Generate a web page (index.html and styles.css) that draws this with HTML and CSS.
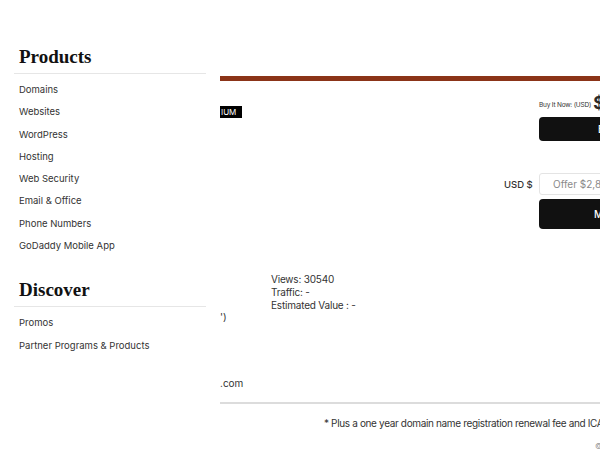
FILE: index.html
```html
<!DOCTYPE html>
<html lang="en">

<head>
    <meta charset="UTF-8">
    <meta name="viewport" content="width=device-width, initial-scale=1.0">
    <title>Domain for sale</title>
    <link rel="stylesheet" href="styles.css">
</head>

<body>
    <div class="layout">
        <!-- side menu -->
        <nav class="menu">
            <h2 class="menu-title">Products</h2>
            <ul class="menu-list">
                <li><a href="javascript:;">Domains</a></li>
                <li><a href="javascript:;">Websites</a></li>
                <li><a href="javascript:;">WordPress</a></li>
                <li><a href="javascript:;">Hosting</a></li>
                <li><a href="javascript:;">Web Security</a></li>
                <li><a href="javascript:;">Email &amp; Office</a></li>
                <li><a href="javascript:;">Phone Numbers</a></li>
                <li><a href="javascript:;">GoDaddy Mobile App</a></li>
            </ul>
            <h2 class="menu-title discover">Discover</h2>
            <ul class="menu-list">
                <li><a href="javascript:;">Promos</a></li>
                <li><a href="javascript:;">Partner Programs &amp; Products</a></li>
            </ul>
        </nav>

        <!-- page behind the menu -->
        <main class="page">
            <div class="bar"></div>
            <div class="top">
                <div class="left">
                    <span class="badge">IUM</span>
                </div>
                <div class="buy">
                    <div></div>
                    <div class="buy-now"><span class="small">Buy It Now: (USD)</span><b>$</b></div>
                    <div></div>
                    <button class="btn btn-buy">Buy Now</button>
                    <span class="cur">USD $</span>
                    <input type="text" placeholder="Offer $2,895">
                    <div></div>
                    <button class="btn btn-offer">Make Offer</button>
                </div>
            </div>
            <div class="stats">
                <p>Views: 30540</p>
                <p>Traffic: -</p>
                <p>Estimated Value : -</p>
            </div>
            <p class="tz">')</p>
            <p class="tld">.com</p>
            <hr class="rule">
            <p class="note">* Plus a one year domain name registration renewal fee and ICANN fee</p>
            <p class="copy">©</p>
        </main>
    </div>
</body>

</html>
```

FILE: styles.css
```css
html,
body,
ul,
p,
h2 {
    margin: 0;
    padding: 0;
}

body {
    width: 600px;
    height: 450px;
    overflow: hidden;
    background: #fff;
    font-family: Inter, "Liberation Sans", sans-serif;
    color: #2b2b2b;
}

.layout {
    display: flex;
    height: 450px;
}

/* 左边菜单 */
.menu {
    width: 192px;
    padding: 46px 0 0 14px;
    margin-right: 14px;
    flex-shrink: 0;
}

.menu-title {
    font-family: "Liberation Serif", serif;
    font-size: 19px;
    font-weight: bold;
    color: #111;
    padding: 0 0 5px 5px;
    border-bottom: 1px solid #e6e6e6;
    line-height: 22px;
}

.discover {
    margin-top: 22px;
}

.menu-list {
    list-style: none;
    padding: 5px 0 0 5px;
}

.menu-list li {
    height: 22.3px;
    line-height: 22px;
    font-size: 9.5px;
}

.menu-list a {
    color: #333;
    text-decoration: none;
}

/* 右边内容 */
.page {
    flex: 1;
    min-width: 0;
    overflow: hidden;
    padding-top: 76px;
    font-size: 10px;
}

.bar {
    height: 5px;
    background: #8b3418;
}

.top {
    display: grid;
    grid-template-columns: 280px 200px;
    height: 155px;
}

.badge {
    display: inline-block;
    margin-top: 25px;
    background: #000;
    color: #fff;
    font-size: 8px;
    line-height: 12px;
    padding: 0 6px 0 1px;
}

/* 购买区 */
.buy {
    display: grid;
    grid-template-columns: 39px 140px;
    align-content: start;
    align-items: center;
}

.buy-now {
    display: flex;
    align-items: flex-end;
    margin-top: 14px;
    height: 16px;
}

.small {
    font-size: 6.5px;
    color: #333;
    margin-right: 2px;
    margin-bottom: 2px;
    letter-spacing: -0.2px;
}

.buy-now b {
    font-size: 17px;
    line-height: 16px;
}

.btn {
    display: block;
    width: 140px;
    border: 0;
    border-radius: 4px;
    background: #111;
    color: #fff;
    font-family: Inter, sans-serif;
    font-size: 10px;
    font-weight: 500;
    text-align: left;
}

.btn-buy {
    height: 24px;
    margin-top: 6px;
    padding-left: 59px;
}

.cur {
    margin-top: 32px;
    padding-left: 4px;
    font-size: 9.5px;
    font-weight: 500;
    color: #333;
}

.buy input {
    margin-top: 32px;
    width: 140px;
    height: 22px;
    box-sizing: border-box;
    border: 1px solid #e4e4e4;
    border-radius: 3px;
    padding-left: 13px;
    font-family: Inter, sans-serif;
    font-size: 10px;
}

.buy input::placeholder {
    color: #8a8a8a;
}

.btn-offer {
    height: 30px;
    margin-top: 4px;
    padding-left: 55px;
}

.stats {
    padding-left: 51px;
    margin-top: 37px;
    line-height: 13px;
    letter-spacing: -0.2px;
    color: #333;
}

.tz {
    margin-top: -1px;
    line-height: 13px;
    color: #333;
}

.tld {
    margin-top: 53px;
    line-height: 13px;
    color: #333;
}

.rule {
    margin: 12px 0 0;
    border: 0;
    height: 2px;
    background: #dcdcdc;
}

.note {
    margin-top: 13px;
    padding-left: 104px;
    white-space: nowrap;
    letter-spacing: -0.35px;
    color: #333;
}

.copy {
    margin-top: 12px;
    padding-left: 375px;
    font-size: 8px;
    color: #999;
}
```
